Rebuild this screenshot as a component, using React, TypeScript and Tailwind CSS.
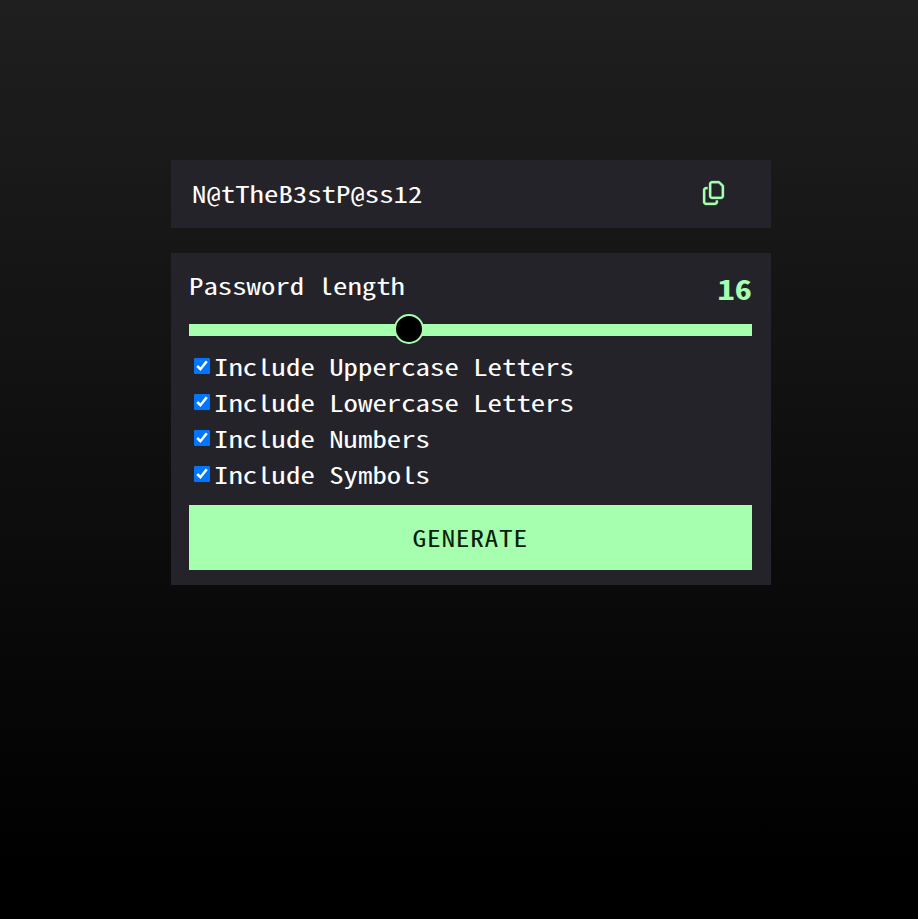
import { useState } from "react";
import { FaRegCopy } from "react-icons/fa6";

const OPTIONS = [
  "Include Uppercase Letters",
  "Include Lowercase Letters",
  "Include Numbers",
  "Include Symbols",
];

const MIN = 0;
const MAX = 42;

export default function App() {
  const [length] = useState(16);
  const percent = ((length - MIN) / (MAX - MIN)) * 100;

  return (
    <div className="h-[919px] bg-linear-to-b/srgb from-[#1f1f1f] to-black to-95% font-['Noto_Sans_Mono_CJK_SC','Liberation_Mono',monospace] text-[22.5px] text-white">
      <main className="ml-[171px] flex w-[600px] flex-col gap-[25px] pt-40">
        <section className="flex h-[68px] items-center justify-between bg-[#24232a] pr-[47px] pl-[20.5px]">
          <span className="mb-[3px] origin-left scale-x-[1.28] leading-8">N@tTheB3stP@ss12</span>
          <button aria-label="Copy" className="mb-0.5 text-[#a5ffaf]">
            <FaRegCopy className="h-6 w-[21px] overflow-visible" strokeWidth={7} />
          </button>
        </section>
        <section className="flex h-[332px] flex-col bg-[#24232a] pr-[19px] pl-[18px]">
          <div className="flex h-[71px] items-start justify-between pt-[15px]">
            <span className="mt-px ml-[0.3px] origin-left scale-x-[1.28] leading-8">Password length</span>
            <span className="mt-1 origin-right scale-x-[1.23] text-[28px] leading-8 font-bold text-[#a5ffaf]">
              {length}
            </span>
          </div>
          <div className="relative h-3 bg-[#a5ffaf]">
            <div
              className="absolute -top-[10px] size-[30px] -translate-x-1/2 rounded-full border-2 border-[#a5ffaf] bg-black"
              style={{ left: `${percent + 0.93}%` }}
            />
          </div>
          <div className="pt-[13px]">
            {OPTIONS.map((option) => (
              <label key={option} className="flex h-9 items-center pl-[5px]">
                <input type="checkbox" defaultChecked className="mr-[4.3px] mb-0.5 size-4" />
                <span className="mb-[3px] origin-left scale-x-[1.28] leading-8">{option}</span>
              </label>
            ))}
          </div>
          <button className="mt-3 h-[65px] bg-[#a5ffaf] text-[22.5px] text-[#0a200a]">
            <span className="inline-block scale-x-[1.22] leading-8 tracking-[0.55px]">GENERATE</span>
          </button>
        </section>
      </main>
    </div>
  );
}
